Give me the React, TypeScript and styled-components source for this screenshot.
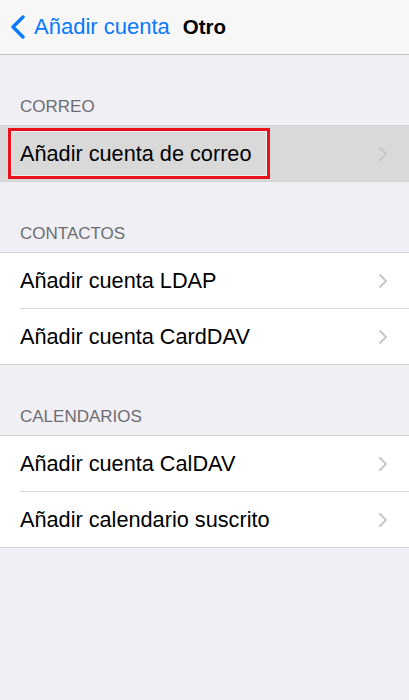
import styled, { createGlobalStyle } from "styled-components";

const GlobalStyle = createGlobalStyle`
  html, body {
    margin: 0;
    padding: 0;
    background: #efeff4;
  }
  body {
    font-family: "Liberation Sans", Arial, sans-serif;
    -webkit-font-smoothing: antialiased;
  }
`;

const Screen = styled.main`
  width: 409px;
  min-height: 700px;
  background: #efeff4;
`;

const NavBar = styled.header`
  height: 54px;
  display: flex;
  align-items: center;
  background: #f7f7f8;
  border-bottom: 1px solid #c4c4c8;
  padding-left: 10px;
  gap: 13px;
`;

const BackButton = styled.button`
  display: flex;
  align-items: center;
  gap: 8px;
  padding: 0;
  border: none;
  background: none;
  color: #0a7afe;
  font-family: inherit;
  font-size: 22px;
  line-height: 26px;
  cursor: pointer;
`;

const NavTitle = styled.h1`
  margin: 0;
  font-size: 20.5px;
  font-weight: 700;
  color: #000;
  line-height: 26px;
`;

const SectionHeader = styled.div`
  height: 70px;
  box-sizing: border-box;
  display: flex;
  align-items: flex-end;
  padding: 0 20px 8px;
  font-size: 17px;
  line-height: 20px;
  color: #6d6d72;
`;

const Group = styled.ul`
  margin: 0;
  padding: 0;
  list-style: none;
  background: #fff;
  border-top: 1px solid #d4d4d8;
  border-bottom: 1px solid #d4d4d8;
`;

const Row = styled.li<{ $selected?: boolean }>`
  position: relative;
  height: 55px;
  display: flex;
  align-items: center;
  justify-content: space-between;
  padding: 0 20px 0 20px;
  background: ${(p) => (p.$selected ? "#d9d9d9" : "#fff")};
  font-size: 21.7px;
  color: #000;

  & + & {
    border-top: 1px solid transparent;
  }

  & + &::before {
    content: "";
    position: absolute;
    top: -1px;
    left: 20px;
    right: 0;
    height: 1px;
    background: #dadade;
  }
`;

const Highlight = styled.span`
  position: absolute;
  left: 8px;
  top: 2px;
  width: 262px;
  height: 51px;
  box-sizing: border-box;
  border: 3px solid #e8101a;
  box-shadow: inset 0 0 0 1px #ececec;
  pointer-events: none;
`;

const Label = styled.span`
  position: relative;
`;

const Chevron = () => (
  <svg width="10" height="16" viewBox="0 0 10 16" style={{ marginRight: 1 }}>
    <path d="M2 2l6 6-6 6" fill="none" stroke="#c7c7cc" strokeWidth="2" strokeLinecap="round" strokeLinejoin="round" />
  </svg>
);

const BackArrow = () => (
  <svg width="16" height="24" viewBox="0 0 16 24">
    <path d="M13 2L3 12l10 10" fill="none" stroke="#0a7afe" strokeWidth="3.4" strokeLinecap="round" strokeLinejoin="round" />
  </svg>
);

const sections = [
  { title: "CORREO", items: ["Añadir cuenta de correo"], selected: 0 },
  { title: "CONTACTOS", items: ["Añadir cuenta LDAP", "Añadir cuenta CardDAV"] },
  { title: "CALENDARIOS", items: ["Añadir cuenta CalDAV", "Añadir calendario suscrito"] },
];

function App() {
  return (
    <Screen>
      <GlobalStyle />
      <NavBar>
        <BackButton>
          <BackArrow />
          Añadir cuenta
        </BackButton>
        <NavTitle>Otro</NavTitle>
      </NavBar>
      {sections.map((s) => (
        <section key={s.title}>
          <SectionHeader>{s.title}</SectionHeader>
          <Group>
            {s.items.map((item, i) => (
              <Row key={item} $selected={s.selected === i}>
                {s.selected === i && <Highlight />}
                <Label>{item}</Label>
                <Chevron />
              </Row>
            ))}
          </Group>
        </section>
      ))}
    </Screen>
  );
}

export default App;
